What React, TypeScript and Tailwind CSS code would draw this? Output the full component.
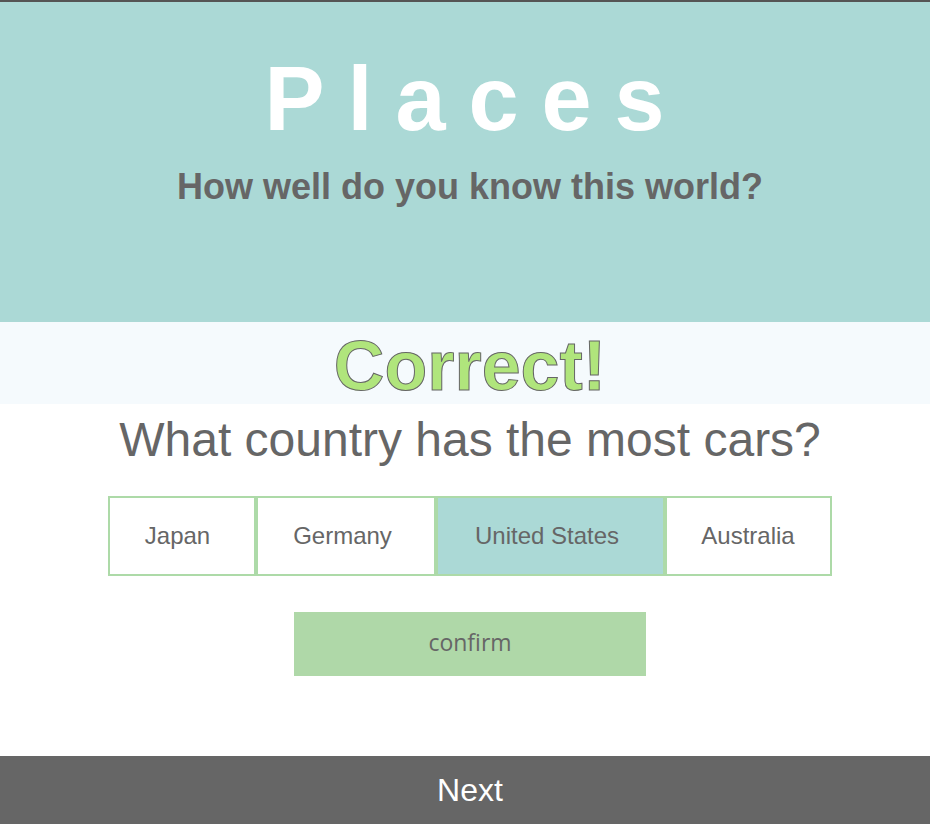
import React, { useState } from 'react';

const OPTIONS: { label: string; width: string; shift: string }[] = [
  { label: 'Japan', width: 'w-[148px]', shift: 'pr-[9px]' },
  { label: 'Germany', width: 'w-[180px]', shift: 'pr-[7px]' },
  { label: 'United States', width: 'w-[229px]', shift: 'pr-[7px]' },
  { label: 'Australia', width: 'w-[167px]', shift: 'pr-[1px]' },
];

export default function App() {
  const [picked, setPicked] = useState('United States');

  return (
    <div className="min-h-[824px] w-full bg-white font-['Liberation_Sans',Arial,sans-serif] flex flex-col">
      {/* header */}
      <header className="h-[322px] bg-[#abd9d6] border-t-2 border-[#555] flex flex-col items-center pt-[52px] pl-[10px]">
        <h1 className="text-[90px] leading-none font-bold text-white tracking-[23px] mr-[-12px]">Places</h1>
        <p className="mt-[25px] text-[36px] leading-none font-bold text-[#666]">How well do you know this world?</p>
      </header>

      {/* result */}
      <div className="h-[82px] bg-[#f5fafd] flex items-center justify-center pt-[6px] pl-[10px]">
        <span className="text-[70px] leading-none font-bold text-[#b0e57c] [-webkit-text-stroke:1px_#666]">Correct!</span>
      </div>

      <main className="flex flex-col items-center pl-[10px]">
        <h2 className="mt-[12px] text-[48px] leading-none text-[#666]">What country has the most cars?</h2>

        <div className="mt-[32px] flex">
          {OPTIONS.map(opt => {
            const active = opt.label === picked;
            return (
              <button
                key={opt.label}
                type="button"
                onClick={() => setPicked(opt.label)}
                className={`h-[80px] ${opt.width} ${opt.shift} border-2 border-[#addaa8] text-[24px] text-[#666] flex items-center justify-center ${active ? 'bg-[#abd9d6]' : 'bg-white'}`}
              >
                {opt.label}
              </button>
            );
          })}
        </div>

        <button
          type="button"
          className="mt-[36px] w-[352px] h-[64px] bg-[#afd8a8] text-[23px] text-[#666] font-['Open_Sans',sans-serif] pb-[3px]"
        >
          confirm
        </button>
      </main>

      {/* footer */}
      <footer className="mt-[80px] h-[68px] bg-[#666] flex items-center justify-center pl-[10px]">
        <span className="text-[32px] text-white">Next</span>
      </footer>
    </div>
  );
}
